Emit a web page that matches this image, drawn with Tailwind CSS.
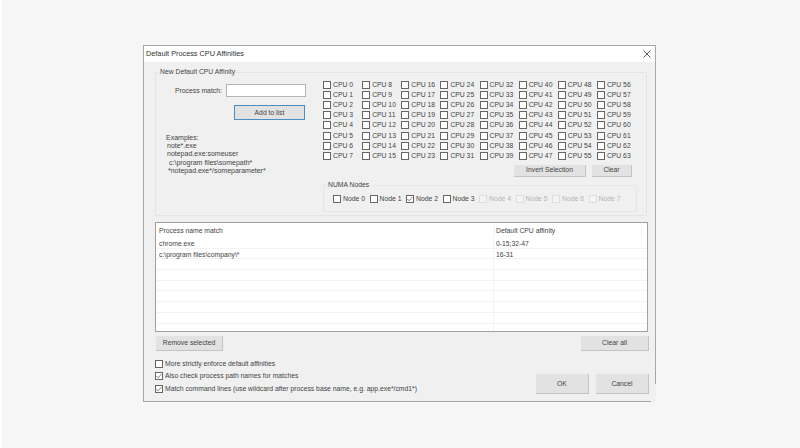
<!DOCTYPE html>
<html lang="en">
<head>
<meta charset="UTF-8">
<title>Default Process CPU Affinities</title>
<script src="https://cdn.jsdelivr.net/npm/@tailwindcss/browser@4"></script>
</head>
<body class="w-[800px] h-[448px] overflow-hidden bg-[#f6f6f6] border-l-2 border-white font-['Liberation_Sans',Arial,sans-serif] text-[6.8px] leading-[10px] text-[#444]">
  <!-- Dialog -->
  <div class="ml-[141px] pt-[45px]">
    <div class="relative w-[513px] h-[357px] bg-[#f0f0f0] border-l border-t border-[#a8a8a8] flex flex-col">
      <div class="absolute right-0 top-0 w-px h-[338px] bg-[#a8a8a8]"></div>
      <div class="absolute left-0 bottom-0 w-[507px] h-px bg-[#a8a8a8]"></div>

      <!-- Title bar -->
      <div class="h-[16px] bg-white flex items-center justify-between pl-[2px] pr-[5px] shrink-0">
        <span class="text-[7.3px] text-[#333]">Default Process CPU Affinities</span>
        <svg width="8" height="8" viewBox="0 0 8 8" fill="none" stroke="#444" stroke-width="0.9"><path d="M0.5 0.5 7.5 7.5M7.5 0.5 0.5 7.5"/></svg>
      </div>

      <!-- New Default CPU Affinity group -->
      <div class="relative ml-[11px] mt-[10px] w-[492px] h-[144px] border border-[#e4e4e4] flex">
        <span class="absolute -top-[6px] left-[3px] bg-[#f0f0f0] px-[1px]">New Default CPU Affinity</span>

        <!-- Left column -->
        <div class="w-[167px] shrink-0 pt-[11px]">
          <div class="flex items-center">
            <span class="ml-[19px] w-[50px]">Process match:</span>
            <div class="ml-[1px] w-[80px] h-[13px] bg-white border border-[#b4b4b4]"></div>
          </div>
          <div class="ml-[78px] mt-[8px] w-[71px] h-[15px] bg-[#e2e2e2] border border-[#4a8fc4] flex items-center justify-center">Add to list</div>
          <div class="ml-[10px] mt-[14px] text-[7px] leading-[8.2px]">
            <div>Examples:</div>
            <div class="ml-[1px]">note*.exe</div>
            <div class="ml-[1px]">notepad.exe:someuser</div>
            <div class="ml-[3px]">c:\program files\somepath*</div>
            <div class="ml-[2px]">*notepad.exe*/someparameter*</div>
          </div>
        </div>

        <!-- CPU checkboxes and NUMA nodes -->
        <div class="flex-1 pt-[7px]">
          <div id="cpus" class="grid grid-cols-[repeat(8,39.14px)] grid-rows-[repeat(8,10.1px)] grid-flow-col"></div>
          <div class="flex justify-end gap-[6px] mr-[14px] mt-[4px]">
            <div class="w-[72px] h-[12px] bg-[#e2e2e2] border-b border-r border-[#c4c4c4] flex items-center justify-center">Invert Selection</div>
            <div class="w-[40px] h-[12px] bg-[#e2e2e2] border-b border-r border-[#c4c4c4] flex items-center justify-center">Clear</div>
          </div>
          <!-- NUMA nodes -->
          <div class="relative mt-[8px] w-[314px] h-[27px] border border-[#e6e6e6] flex items-center pl-[9px] pt-[2px]">
            <span class="absolute -top-[6px] left-[4px] bg-[#f0f0f0] pr-[1px]">NUMA Nodes</span>
            <div class="grid grid-cols-[repeat(8,36.5px)]">
              <label class="flex items-center gap-[2px]"><i class="w-[8px] h-[8px] border border-[#666] bg-white"></i>Node 0</label>
              <label class="flex items-center gap-[2px]"><i class="w-[8px] h-[8px] border border-[#666] bg-white"></i>Node 1</label>
              <label class="flex items-center gap-[2px]"><svg class="w-[8px] h-[8px]" viewBox="0 0 8 8" fill="#fff" stroke="#666" stroke-width="1"><rect x="0.5" y="0.5" width="7" height="7"/><path d="M1.5 4 3.2 5.8 6.5 2" fill="none" stroke-width="0.8"/></svg>Node 2</label>
              <label class="flex items-center gap-[2px]"><i class="w-[8px] h-[8px] border border-[#666] bg-white"></i>Node 3</label>
              <label class="flex items-center gap-[2px] text-[#b4b4b4]"><i class="w-[8px] h-[8px] border border-[#ddd] bg-[#f4f4f4]"></i>Node 4</label>
              <label class="flex items-center gap-[2px] text-[#b4b4b4]"><i class="w-[8px] h-[8px] border border-[#ddd] bg-[#f4f4f4]"></i>Node 5</label>
              <label class="flex items-center gap-[2px] text-[#b4b4b4]"><i class="w-[8px] h-[8px] border border-[#ddd] bg-[#f4f4f4]"></i>Node 6</label>
              <label class="flex items-center gap-[2px] text-[#b4b4b4]"><i class="w-[8px] h-[8px] border border-[#ddd] bg-[#f4f4f4]"></i>Node 7</label>
            </div>
          </div>
        </div>
      </div>

      <!-- List -->
      <div class="ml-[11px] mt-[6px] w-[493px] h-[110px] bg-white border border-[#a0a0a0] flex flex-col shrink-0">
        <div class="h-[15px] grid grid-cols-[338px_148px_1fr] items-center">
          <span class="pl-[3px]">Process name match</span>
          <span class="pl-[1px] border-l border-r border-[#f0f0f0]">Default CPU affinity</span>
        </div>
        <div id="rows" class="flex-1 flex flex-col">
          <div class="h-[10.7px] shrink-0 grid grid-cols-[338px_1fr] leading-[11px] border-b border-[#f2f2f2]"><span class="pl-[3px] border-r border-[#f2f2f2]">chrome.exe</span><span class="pl-[2px]">0-15;32-47</span></div>
          <div class="h-[10.7px] shrink-0 grid grid-cols-[338px_1fr] leading-[11px] border-b border-[#f2f2f2]"><span class="pl-[3px] border-r border-[#f2f2f2]">c:\program files\company\*</span><span class="pl-[2px]">16-31</span></div>
        </div>
      </div>

      <!-- Bottom area -->
      <div class="relative flex-1">
        <div class="absolute left-[12px] top-[4px] w-[67px] h-[15px] bg-[#e2e2e2] border-b border-r border-[#c4c4c4] flex items-center justify-center">Remove selected</div>
        <div class="absolute left-[437px] top-[4px] w-[68px] h-[15px] bg-[#e2e2e2] border-b border-r border-[#c4c4c4] flex items-center justify-center">Clear all</div>
        <div class="absolute left-[11px] top-[27px] flex flex-col gap-[2.3px]">
          <label class="flex items-center gap-[2px]"><i class="w-[8px] h-[8px] border border-[#666] bg-white"></i>More strictly enforce default affinities</label>
          <label class="flex items-center gap-[2px]"><svg class="w-[8px] h-[8px]" viewBox="0 0 8 8" fill="#fff" stroke="#666" stroke-width="1"><rect x="0.5" y="0.5" width="7" height="7"/><path d="M1.5 4 3.2 5.8 6.5 2" fill="none" stroke-width="0.8"/></svg>Also check process path names for matches</label>
          <label class="flex items-center gap-[2px]"><svg class="w-[8px] h-[8px]" viewBox="0 0 8 8" fill="#fff" stroke="#666" stroke-width="1"><rect x="0.5" y="0.5" width="7" height="7"/><path d="M1.5 4 3.2 5.8 6.5 2" fill="none" stroke-width="0.8"/></svg>Match command lines (use wildcard after process base name, e.g. app.exe*/cmd1*)</label>
        </div>
        <div class="absolute left-[392px] top-[42px] w-[53px] h-[20px] bg-[#e2e2e2] border-b border-r border-[#c4c4c4] flex items-center justify-center">OK</div>
        <div class="absolute left-[452px] top-[42px] w-[53px] h-[20px] bg-[#e2e2e2] border-b border-r border-[#c4c4c4] flex items-center justify-center">Cancel</div>
      </div>
    </div>
  </div>

  <script>
    // 64 cpu checkboxes, 8 per column
    const cpus = document.getElementById('cpus');
    for (let i = 0; i < 64; i++) {
      cpus.insertAdjacentHTML('beforeend', `<label class="flex items-center gap-[2px]"><i class="w-[8px] h-[8px] border border-[#666] bg-white"></i>CPU ${i}</label>`);
    }
    // empty list rows
    const rows = document.getElementById('rows');
    for (let i = 0; i < 6; i++) {
      rows.insertAdjacentHTML('beforeend', `<div class="h-[10.7px] shrink-0 grid grid-cols-[338px_1fr] border-b border-[#f2f2f2]"><span class="border-r border-[#f2f2f2]"></span></div>`);
    }
    rows.insertAdjacentHTML('beforeend', `<div class="flex-1 grid grid-cols-[338px_1fr]"><span class="border-r border-[#f2f2f2]"></span></div>`);
  </script>
</body>
</html>
